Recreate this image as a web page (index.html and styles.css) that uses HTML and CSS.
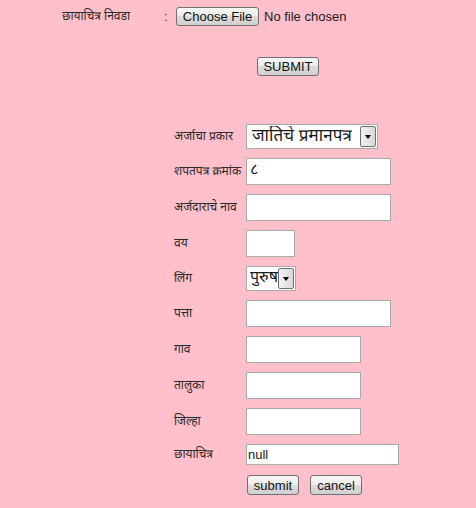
FILE: index.html
```html
<!DOCTYPE html>
<html>
<head>
<meta charset="utf-8">
<link rel="stylesheet" href="styles.css">
</head>
<body>
<div class="top">
  <span class="top-label dev">छायाचित्र निवडा</span>
  <span class="colon">:</span>
  <span class="btn file-btn">Choose File</span>
  <span class="nofile">No file chosen</span>
</div>
<div class="submit-row">
  <span class="btn">SUBMIT</span>
</div>
<div class="form">
  <div class="row">
    <span class="label dev">अर्जाचा प्रकार</span>
    <div class="select wide-select"><span class="sel-text dev">जातिचे प्रमानपत्र</span><span class="arrow"><i></i></span></div>
  </div>
  <div class="row">
    <span class="label dev">शपतपत्र क्रमांक</span>
    <div class="input w144"><span class="dev val">८</span></div>
  </div>
  <div class="row">
    <span class="label dev">अर्जदाराचे नाव</span>
    <div class="input w144"></div>
  </div>
  <div class="row">
    <span class="label dev">वय</span>
    <div class="input w48"></div>
  </div>
  <div class="row">
    <span class="label dev">लिंग</span>
    <div class="select small-select"><span class="sel-text dev">पुरुष</span><span class="arrow"><i></i></span></div>
  </div>
  <div class="row">
    <span class="label dev">पत्ता</span>
    <div class="input w144"></div>
  </div>
  <div class="row">
    <span class="label dev">गाव</span>
    <div class="input w114"></div>
  </div>
  <div class="row">
    <span class="label dev">तालुका</span>
    <div class="input w114"></div>
  </div>
  <div class="row">
    <span class="label dev">जिल्हा</span>
    <div class="input w114"></div>
  </div>
  <div class="row">
    <span class="label dev">छायाचित्र</span>
    <div class="input plain">null</div>
  </div>
  <div class="row buttons">
    <span class="btn">submit</span>
    <span class="btn">cancel</span>
  </div>
</div>
</body>
</html>
```
FILE: styles.css
```css
html, body {
  margin: 0;
  padding: 0;
  background: #ffc0cb;
  font-family: "Liberation Sans", Arial, sans-serif;
  font-size: 13px;
  color: #1a1a1a;
}
.dev {
  font-family: "Noto Sans Devanagari", "Lohit Devanagari", "Mangal", "Noto Sans", sans-serif;
}
.top {
  display: flex;
  align-items: center;
  padding: 7px 0 0 62px;
  height: 19px;
}
.top-label {
  width: 102px;
  font-size: 12px;
  color: #2a2a2a;
  white-space: nowrap;
}
.colon {
  width: 12px;
  color: #333;
}
.btn {
  display: inline-flex;
  align-items: center;
  justify-content: center;
  box-sizing: border-box;
  height: 19px;
  padding: 0 2px;
  border: 1px solid #707070;
  border-radius: 3px;
  background: linear-gradient(#f6f6f6, #ececec 50%, #dcdcdc 50%, #d0d0d0);
  font-family: "Liberation Sans", Arial, sans-serif;
  font-size: 13px;
  color: #111;
  white-space: nowrap;
}
.file-btn {
  width: 83px;
}
.nofile {
  margin-left: 5px;
  white-space: nowrap;
}
.submit-row {
  padding-left: 257px;
  margin-top: 31px;
}
.submit-row .btn {
  width: 62px;
}
.form {
  margin-top: 48px;
  padding-left: 174px;
  display: flex;
  flex-direction: column;
  gap: 9px;
}
.row {
  display: flex;
  align-items: center;
}
.label {
  width: 72px;
  font-size: 12px;
  color: #2a2a2a;
  white-space: nowrap;
  padding-top: 1px;
}
.input {
  box-sizing: border-box;
  height: 27px;
  background: #fff;
  border: 1px solid #a9a9a9;
  display: flex;
  align-items: center;
  padding-left: 3px;
}
.w144 { width: 145px; }
.w48 { width: 49px; }
.w114 { width: 115px; }
.val { font-size: 16px; }
.input.plain {
  height: 21px;
  width: 153px;
  font-size: 13px;
  padding-left: 1px;
}
.select {
  box-sizing: border-box;
  height: 25px;
  background: #fff;
  border: 1px solid #a9a9a9;
  display: flex;
  align-items: center;
  justify-content: space-between;
  padding: 1px;
}
.wide-select { width: 132px; }
.small-select { width: 50px; }
.sel-text {
  font-size: 17px;
  padding-left: 4px;
  white-space: nowrap;
  overflow: hidden;
  letter-spacing: 0.1px;
}
.small-select .sel-text {
  padding-left: 2px;
  font-size: 16px;
  letter-spacing: 0;
}
.arrow {
  box-sizing: border-box;
  width: 16px;
  height: 21px;
  flex: none;
  border: 1px solid #707070;
  border-radius: 2px;
  background: linear-gradient(90deg, #f2f2f2, #d8d8d8);
  display: flex;
  align-items: center;
  justify-content: center;
}
.arrow i {
  width: 0;
  height: 0;
  border-left: 3px solid transparent;
  border-right: 3px solid transparent;
  border-top: 4px solid #000;
}
.buttons {
  margin-top: 1px;
  padding-left: 73px;
  gap: 11px;
}
.buttons .btn {
  width: 52px;
  height: 20px;
}
```
